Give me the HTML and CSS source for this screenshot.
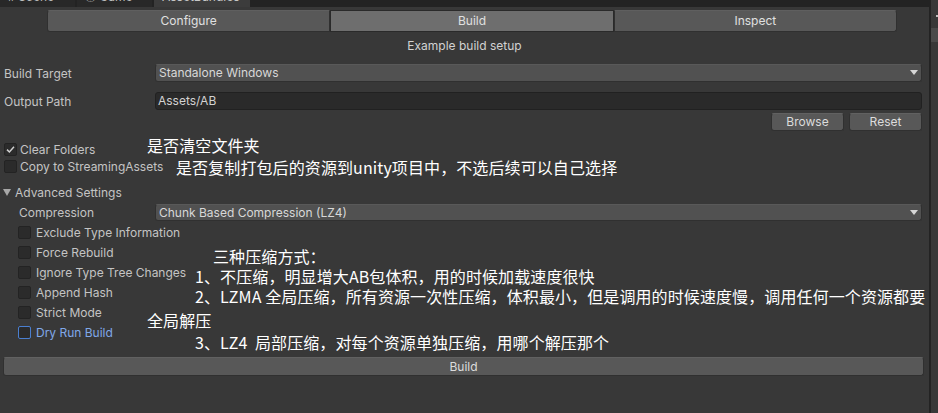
FILE: index.html
```html
<!DOCTYPE html>
<html>
<head>
<meta charset="utf-8">
<link rel="stylesheet" href="styles.css">
</head>
<body>
<div class="window">
  <div class="main">
    <div class="tabbar">
      <div class="tab"><span class="tab-ico">#</span> Scene</div>
      <div class="tab"><span class="tab-ico">&#9673;</span> Game</div>
      <div class="tab active">AssetBundles</div>
    </div>
    <div class="toolbar">
      <div class="tbtn">Configure</div>
      <div class="tbtn on">Build</div>
      <div class="tbtn">Inspect</div>
    </div>
    <div class="subtitle">Example build setup</div>

    <div class="row r-target">
      <div class="label">Build Target</div>
      <div class="dropdown">Standalone Windows<span class="arrow"></span></div>
    </div>
    <div class="row r-output">
      <div class="label">Output Path</div>
      <div class="textfield">Assets/AB</div>
    </div>
    <div class="row r-btns">
      <div class="btn">Browse</div>
      <div class="btn">Reset</div>
    </div>

    <div class="check r-clear"><span class="box checked"><svg width="11" height="11" viewBox="0 0 11 11"><path d="M2 5.6 L4.4 8 L9 2.8" fill="none" stroke="#d0d0d0" stroke-width="1.5"/></svg></span><span class="ctext">Clear Folders</span></div>
    <div class="check r-copy"><span class="box"></span><span class="ctext">Copy to StreamingAssets</span></div>

    <div class="fold r-adv"><span class="tri"></span>Advanced Settings</div>
    <div class="row r-comp">
      <div class="label sub">Compression</div>
      <div class="dropdown">Chunk Based Compression (LZ4)<span class="arrow"></span></div>
    </div>
    <div class="opts">
      <div class="check sub"><span class="box"></span><span class="ctext">Exclude Type Information</span></div>
      <div class="check sub"><span class="box"></span><span class="ctext">Force Rebuild</span></div>
      <div class="check sub"><span class="box"></span><span class="ctext">Ignore Type Tree Changes</span></div>
      <div class="check sub"><span class="box"></span><span class="ctext">Append Hash</span></div>
      <div class="check sub"><span class="box"></span><span class="ctext">Strict Mode</span></div>
      <div class="check sub focus"><span class="box"></span><span class="ctext">Dry Run Build</span></div>
    </div>
    <div class="buildbtn">Build</div>
  </div>
  <div class="side">
    <div class="side-dot"></div>
    <div class="side-box"></div>
  </div>
</div>

<div class="note n1">是否清空文件夹</div>
<div class="note n2">是否复制打包后的资源到unity项目中，不选后续可以自己选择</div>
<div class="note n3">三种压缩方式：</div>
<div class="note n4">1、不压缩，明显增大AB包体积，用的时候加载速度很快</div>
<div class="note n5">2、LZMA 全局压缩，所有资源一次性压缩，体积最小，但是调用的时候速度慢，调用任何一个资源都要</div>
<div class="note n6">全局解压</div>
<div class="note n7">3、LZ4&nbsp; 局部压缩，对每个资源单独压缩，用哪个解压那个</div>
</body>
</html>
```

FILE: styles.css
```css
* { box-sizing: border-box; }
html, body { margin: 0; padding: 0; }
body {
  width: 938px;
  height: 413px;
  overflow: hidden;
  background: #383838;
  font-family: Inter, "Noto Sans", "Noto Sans CJK SC", sans-serif;
  font-size: 12px;
  color: #c4c4c4;
  position: relative;
}
.window { display: flex; height: 413px; }
.main { width: 929px; display: flex; flex-direction: column; }
.side {
  width: 9px;
  border-left: 2px solid #232323;
  background: #383838;
  display: flex;
  flex-direction: column;
  align-items: flex-end;
}
.side-dot { width: 2px; height: 2px; background: #bdbdbd; margin-top: 15px; }
.side-box { width: 7px; height: 14px; background: #4a4a4a; margin-top: 11px; }

.tabbar {
  height: 7px;
  background: #232323;
  display: flex;
  overflow: hidden;
}
.tab {
  height: 20px;
  margin-top: -13px;
  line-height: 20px;
  padding: 0 10px 0 8px;
  color: #bdbdbd;
  font-size: 12px;
  background: #282828;
  margin-right: 2px;
  width: 75px;
}
.tab.active { background: #3c3c3c; width: 96px; color: #c8c8c8; padding-left: 8px; }
.tab-ico { font-size: 11px; }

.toolbar {
  margin: 3px 0 0 47px;
  width: 850px;
  height: 22px;
  display: flex;
}
.tbtn {
  flex: 1;
  background: #585858;
  border: 1px solid #303030;
  border-top-color: #5f5f5f;
  line-height: 20px;
  text-align: center;
  color: #e0e0e0;
  font-size: 12px;
}
.tbtn:first-child { border-radius: 3px 0 0 3px; }
.tbtn:last-child { border-radius: 0 3px 3px 0; }
.tbtn.on { background: #6e6e6e; border-color: #2a2a2a; }

.subtitle {
  margin-top: 4px;
  height: 20px;
  line-height: 20px;
  text-align: center;
  color: #d2d2d2;
}

.row { display: flex; align-items: center; height: 18px; padding-right: 7px; }
.label { width: 155px; padding-left: 4px; color: #c4c4c4; }
.label.sub { padding-left: 19px; }
.r-target { margin-top: 8px; }
.r-output { margin-top: 10px; }
.r-btns { margin-top: 3px; justify-content: flex-end; gap: 5px; }
.r-comp { margin-top: 4px; height: 17px; }

.dropdown {
  flex: 1;
  height: 18px;
  background: #515151;
  border: 1px solid #303030;
  border-top-color: #595959;
  border-radius: 3px;
  line-height: 16px;
  padding-left: 3px;
  color: #d8d8d8;
  position: relative;
}
.r-comp .dropdown { height: 17px; line-height: 15px; }
.arrow {
  position: absolute;
  right: 3px;
  top: 5px;
  width: 0; height: 0;
  border-left: 4px solid transparent;
  border-right: 4px solid transparent;
  border-top: 5px solid #d6d6d6;
}
.textfield {
  flex: 1;
  height: 18px;
  background: #2a2a2a;
  border: 1px solid #212121;
  border-radius: 3px;
  line-height: 16px;
  padding-left: 2px;
  color: #d2d2d2;
}
.btn {
  width: 73px;
  height: 18px;
  background: #585858;
  border: 1px solid #303030;
  border-top-color: #616161;
  border-radius: 3px;
  text-align: center;
  line-height: 16px;
  color: #dcdcdc;
}

.check { display: flex; align-items: center; height: 16px; padding-left: 4px; }
.check.sub { height: 20px; padding-left: 18px; }
.r-clear { margin-top: 10px; }
.r-copy { margin-top: 1px; }
.box {
  width: 13px; height: 13px;
  background: #2b2b2b;
  border: 1px solid #232323;
  border-radius: 2px;
  display: flex; align-items: center; justify-content: center;
  flex: none;
}
.ctext { margin-left: 3px; color: #c4c4c4; }
.check.sub .ctext { margin-left: 5px; color: #c4c4c4; }
.check.focus .box { border-color: #4a7fd0; background: #2b2b2b; }
.check.focus .ctext { color: #80a8e8; }

.fold { margin-top: 10px; height: 16px; display: flex; align-items: center; padding-left: 3px; color: #c4c4c4; }
.tri {
  width: 0; height: 0;
  border-left: 4px solid transparent;
  border-right: 4px solid transparent;
  border-top: 7px solid #a8a8a8;
  margin-right: 4px;
}
.opts { margin-top: 1px; }

.buildbtn {
  margin: 15px 0 0 3px;
  width: 921px;
  height: 19px;
  background: #585858;
  border: 1px solid #303030;
  border-top-color: #616161;
  border-radius: 3px;
  text-align: center;
  line-height: 17px;
  color: #dcdcdc;
}

.note {
  position: absolute;
  white-space: nowrap;
  font-family: "Noto Sans CJK SC", "Noto Sans", sans-serif;
  font-size: 16px;
  color: #ffffff;
  line-height: 18px;
  letter-spacing: 0.1px;
}
.n1 { left: 147px; top: 136px; }
.n2 { left: 176px; top: 158px; }
.n3 { left: 213px; top: 247px; }
.n4 { left: 195px; top: 267px; }
.n5 { left: 195px; top: 287px; }
.n6 { left: 147px; top: 311px; }
.n7 { left: 195px; top: 333px; }
```
